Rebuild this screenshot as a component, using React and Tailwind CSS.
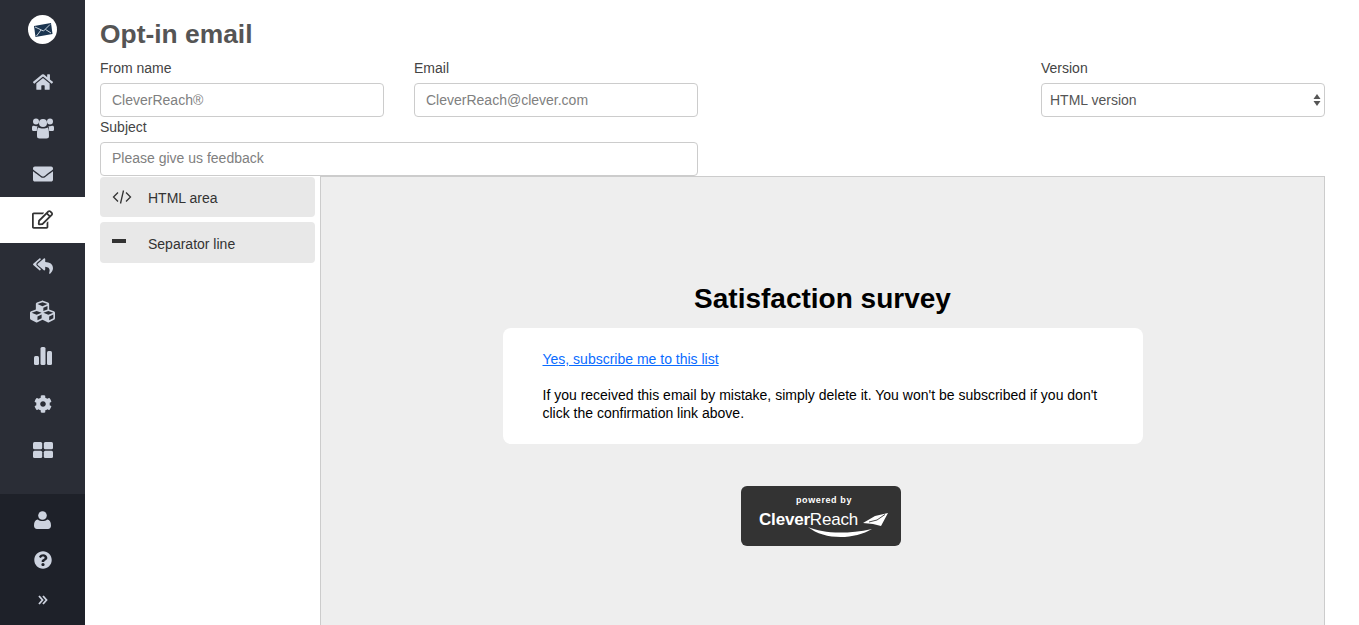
import React from "react";
import {
  FaHome,
  FaEnvelope,
  FaRegEdit,
  FaReplyAll,
  FaCubes,
  FaCog,
  FaQuestionCircle,
} from "react-icons/fa";

// Small custom icons
const BarsIcon = () => (
  <svg width="20" height="20" viewBox="0 0 20 20" fill="currentColor" className="mb-[4px]">
    <rect x="1" y="10" width="5" height="9" rx="1.5" />
    <rect x="7.5" y="1" width="5" height="18" rx="1.5" />
    <rect x="14" y="5" width="5" height="14" rx="1.5" />
  </svg>
);

const TilesIcon = () => (
  <svg width="20" height="16" viewBox="0 0 20 16" fill="currentColor">
    <rect x="0" y="0" width="9.2" height="7.2" rx="1.5" />
    <rect x="10.8" y="0" width="9.2" height="7.2" rx="1.5" />
    <rect x="0" y="8.8" width="9.2" height="7.2" rx="1.5" />
    <rect x="10.8" y="8.8" width="9.2" height="7.2" rx="1.5" />
  </svg>
);

const UsersIcon = () => (
  <svg width="22" height="21" viewBox="0 0 22 21" fill="currentColor">
    <circle cx="4" cy="3.6" r="3" />
    <circle cx="18" cy="3.6" r="3" />
    <circle cx="11" cy="5" r="4" />
    <path d="M0 9.5 C0 7.8 1 7.5 2 7.8 C3 8.3 4.5 8.3 5.5 8 C5 9.5 5 11 4.8 13 L1.5 13 C0.5 13 0 12.4 0 11.5 Z" />
    <path d="M22 9.5 C22 7.8 21 7.5 20 7.8 C19 8.3 17.5 8.3 16.5 8 C17 9.5 17 11 17.2 13 L20.5 13 C21.5 13 22 12.4 22 11.5 Z" />
    <path d="M6.5 9.5 C8.5 10.8 13.5 10.8 15.5 9.5 C16.8 10 17 13 17 18 C17 19.8 16 20.5 14.5 20.5 L7.5 20.5 C6 20.5 5 19.8 5 18 C5 13 5.2 10 6.5 9.5 Z" />
  </svg>
);

const UserIcon = () => (
  <svg width="17" height="18" viewBox="0 0 17 18" fill="currentColor">
    <circle cx="8.5" cy="4.5" r="4.3" />
    <path d="M3.8 8.6 C6 10.6 11 10.6 13.2 8.6 C15.6 9 17 11 17 14.6 C17 16.8 15.8 18 14 18 L3 18 C1.2 18 0 16.8 0 14.6 C0 11 1.4 9 3.8 8.6 Z" />
  </svg>
);

const ChevronsIcon = () => (
  <svg width="10" height="10" viewBox="0 0 10 10" fill="none" stroke="currentColor" strokeWidth="1.8">
    <path d="M1 1 L4.5 5 L1 9" />
    <path d="M5 1 L8.5 5 L5 9" />
  </svg>
);

const LogoMark = () => (
  <div className="w-[29px] h-[29px] rounded-full bg-white flex items-center justify-center">
    <svg width="20" height="16" viewBox="0 0 20 16">
      <path d="M1 4 L18 1 L19.5 12 L2.5 15 Z" fill="#1b3550" />
      <path d="M2 5 L10.5 9 L17 2.5 M3.5 14 L8 8 M18 11 L12.5 7.5" fill="none" stroke="#dfe6ee" strokeWidth="0.9" />
    </svg>
  </div>
);

const CodeIcon = () => (
  <svg width="20" height="16" viewBox="0 0 20 16" fill="none" stroke="#333" strokeWidth="1.3">
    <path d="M6 3.5 L1.5 8 L6 12.5" />
    <path d="M14 3.5 L18.5 8 L14 12.5" />
    <path d="M11.5 1.5 L8.5 14.5" />
  </svg>
);

const navItems = [
  { icon: <FaHome size={20} /> },
  { icon: <UsersIcon /> },
  { icon: <FaEnvelope size={20} /> },
  { icon: <FaRegEdit size={21} className="mb-[2px]" />, active: true },
  { icon: <FaReplyAll size={20} /> },
  { icon: <FaCubes size={25} className="mb-[2px]" /> },
  { icon: <BarsIcon /> },
  { icon: <FaCog size={18} /> },
  { icon: <TilesIcon /> },
];

const Sidebar = () => (
  <aside className="w-[85px] shrink-0 flex flex-col bg-[#2a2d36] text-[#cdd3df]">
    <div className="h-[59px] flex items-center justify-center">
      <LogoMark />
    </div>
    <nav className="flex-1">
      {navItems.map((item, i) => (
        <div
          key={i}
          className={`h-[46px] flex items-center justify-center ${
            item.active ? "bg-white text-[#333]" : ""
          }`}
        >
          {item.icon}
        </div>
      ))}
    </nav>
    <div className="h-[131px] bg-[#1e2129] flex flex-col items-center pt-[6px]">
      <div className="h-[40px] flex items-center">
        <UserIcon />
      </div>
      <div className="h-[40px] flex items-center">
        <FaQuestionCircle size={18} />
      </div>
      <div className="h-[40px] flex items-center">
        <ChevronsIcon />
      </div>
    </div>
  </aside>
);

const Field = ({ label, placeholder, width = "w-[284px]", inputClass = "" }) => (
  <div className={width}>
    <label className="block text-sm leading-5 text-[#444]">{label}</label>
    <input
      type="text"
      placeholder={placeholder}
      className={`mt-[5px] block w-full h-[34px] px-[11px] text-sm text-[#555] placeholder:text-[#808080] bg-white border border-[#ccc] rounded outline-none ${inputClass}`}
    />
  </div>
);

const Block = ({ icon, label, height }) => (
  <div className={`${height} flex items-center bg-[#e8e8e8] rounded-sm`}>
    <div className="w-[48px] pl-3 flex items-center">{icon}</div>
    <span className="mt-[2px] text-sm text-[#333]">{label}</span>
  </div>
);

const PoweredBy = () => (
  <div className="w-[160px] h-[60px] ml-[420px] bg-[#333] rounded-md flex flex-col items-center pt-[8px] text-white">
    <span className="ml-[6px] text-[9px] leading-[13px] font-bold tracking-[0.6px]">powered by</span>
    <div className="relative flex items-center mt-[3px] ml-[6px]">
      <span className="text-[17px] leading-[20px] tracking-[-0.2px]">
        <b>Clever</b>Reach
      </span>
      <svg width="27" height="17" viewBox="0 0 27 17" className="ml-[4px]" fill="#fff">
        <path d="M1 11 L13 4 L26 1 L19 14 L11 12 Z" />
        <path d="M7 10 L15 8 L23 2.5" fill="none" stroke="#333" strokeWidth="0.9" />
      </svg>
      <svg
        width="66"
        height="13"
        viewBox="0 0 66 13"
        className="absolute left-[49px] top-[16px]"
        fill="#fff"
      >
        <path d="M0 1 C14 7 36 9 64 3 C46 14 16 14 0 1 Z" />
      </svg>
    </div>
  </div>
);

export default function App() {
  return (
    <div className="h-screen overflow-hidden flex bg-white font-['Liberation_Sans',Arial,sans-serif]">
      <Sidebar />
      <main className="flex-1 min-w-0 pl-[15px] pr-[34px] flex flex-col">
        <h1 className="pt-[17px] text-[26.4px] leading-[34px] font-bold text-[#555]">Opt-in email</h1>
        <div className="mt-[7px] flex gap-[30px]">
          <Field label="From name" placeholder="CleverReach®" />
          <Field label="Email" placeholder="CleverReach@clever.com" />
          <div className="w-[284px] ml-auto">
            <label className="block text-sm leading-5 text-[#444]">Version</label>
            <div className="relative mt-[5px]">
              <select className="block w-full h-[34px] pl-[8px] pr-6 text-sm text-[#555] bg-white border border-[#ccc] rounded outline-none appearance-none">
                <option>HTML version</option>
              </select>
              <svg
                width="8"
                height="14"
                viewBox="0 0 8 14"
                fill="#555"
                className="absolute right-[4px] top-[10px]"
              >
                <path d="M4 1 L7.5 6 L0.5 6 Z" />
                <path d="M4 13 L7.5 8 L0.5 8 Z" />
              </svg>
            </div>
          </div>
        </div>
        <div>
          <Field label="Subject" placeholder="Please give us feedback" width="w-[598px]" inputClass="pb-[2px]" />
        </div>
        <div className="flex-1 min-h-0 flex gap-[5px]">
          <div className="w-[215px] pt-[1px] flex flex-col gap-[5px]">
            <Block icon={<CodeIcon />} label="HTML area" height="h-[40px]" />
            <Block
              icon={<div className="w-[14px] h-[4px] bg-[#333] mb-[4px]" />}
              label="Separator line"
              height="h-[41px]"
            />
          </div>
          <div className="flex-1 bg-[#eee] border border-b-0 border-[#ccc] pt-[106px]">
            <h2 className="text-center text-[28px] leading-[32px] font-bold text-black">Satisfaction survey</h2>
            <div className="w-[640px] mx-auto mt-[13px] bg-white rounded-lg px-[40px] pt-[22px] pb-[22px] text-sm leading-[18px] text-black">
              <a href="#" className="text-[#0a6cff] underline">
                Yes, subscribe me to this list
              </a>
              <p className="mt-[18px]">
                If you received this email by mistake, simply delete it. You won't be subscribed if you don't click
                the confirmation link above.
              </p>
            </div>
            <div className="mt-[42px]">
              <PoweredBy />
            </div>
          </div>
        </div>
      </main>
    </div>
  );
}
